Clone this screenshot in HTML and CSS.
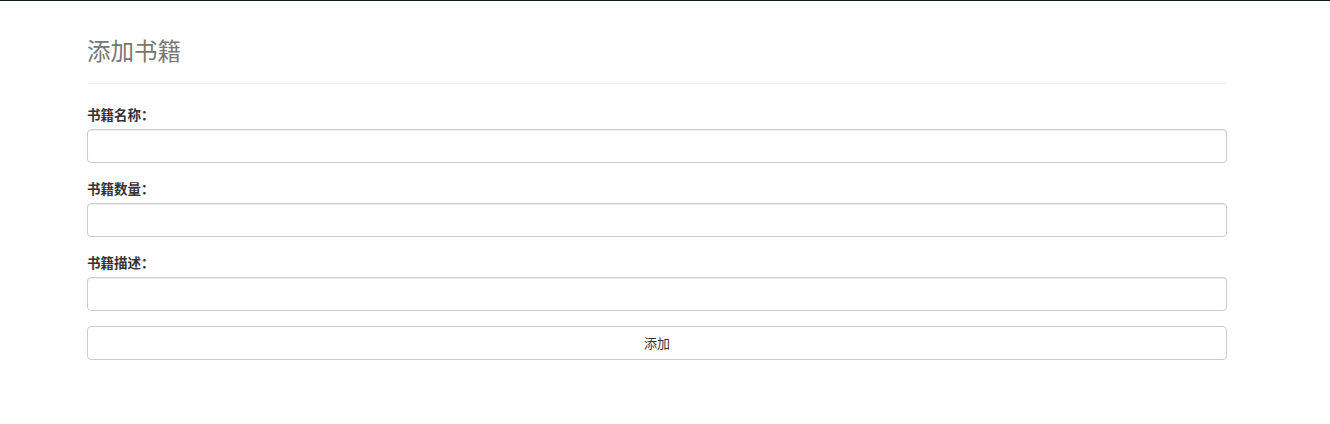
FILE: index.html
```html
<!DOCTYPE html>
<html lang="zh-CN">
<head>
<meta charset="utf-8">
<title>添加书籍</title>
<link rel="stylesheet" href="styles.css">
</head>
<body>
<div class="topline"></div>
<div class="container">
  <div class="page-header">
    <h3 class="title">添加书籍</h3>
  </div>
  <form class="book-form">
    <div class="form-group">
      <label class="form-label">书籍名称：</label>
      <input class="form-control" type="text">
    </div>
    <div class="form-group">
      <label class="form-label">书籍数量：</label>
      <input class="form-control" type="text">
    </div>
    <div class="form-group">
      <label class="form-label">书籍描述：</label>
      <input class="form-control" type="text">
    </div>
    <div class="form-group">
      <button class="btn" type="button">添加</button>
    </div>
  </form>
</div>
</body>
</html>
```
FILE: styles.css
```css
* { box-sizing: border-box; }
html, body {
  margin: 0;
  padding: 0;
  background: #fff;
}
body {
  font-family: "Helvetica Neue", Helvetica, Arial, "Noto Sans CJK SC", sans-serif;
  font-size: 14px;
  line-height: 1.42857;
  color: #333;
}
.topline {
  height: 1px;
  background: #0b1a1f;
}
.container {
  width: 1140px;
  margin-left: 87px;
}
.page-header {
  margin-top: 37px;
  padding-bottom: 19px;
  border-bottom: 1px solid #eee;
  margin-bottom: 20px;
}
.title {
  margin: 0;
  font-size: 23.5px;
  font-weight: 400;
  line-height: 1.1;
  color: #777;
  font-family: "Noto Sans CJK SC", sans-serif;
}
.book-form {
  display: flex;
  flex-direction: column;
}
.form-group {
  display: flex;
  flex-direction: column;
  margin-bottom: 15px;
}
.form-label {
  font-weight: 700;
  margin-bottom: 5px;
  height: 20px;
  font-family: "Noto Sans CJK SC", sans-serif;
  font-size: 13.5px;
  line-height: 20px;
}
.form-control {
  display: block;
  width: 100%;
  height: 34px;
  padding: 6px 12px;
  font-size: 14px;
  color: #555;
  background: #fff;
  border: 1px solid #ccc;
  border-radius: 4px;
  box-shadow: inset 0 1px 1px rgba(0,0,0,.075);
  outline: none;
}
.btn {
  display: block;
  width: 100%;
  height: 34px;
  padding: 6px 12px;
  font-size: 13px;
  line-height: 20px;
  color: #333;
  background: #fff;
  border: 1px solid #ccc;
  border-radius: 4px;
  font-family: "Noto Sans CJK SC", sans-serif;
}
```
